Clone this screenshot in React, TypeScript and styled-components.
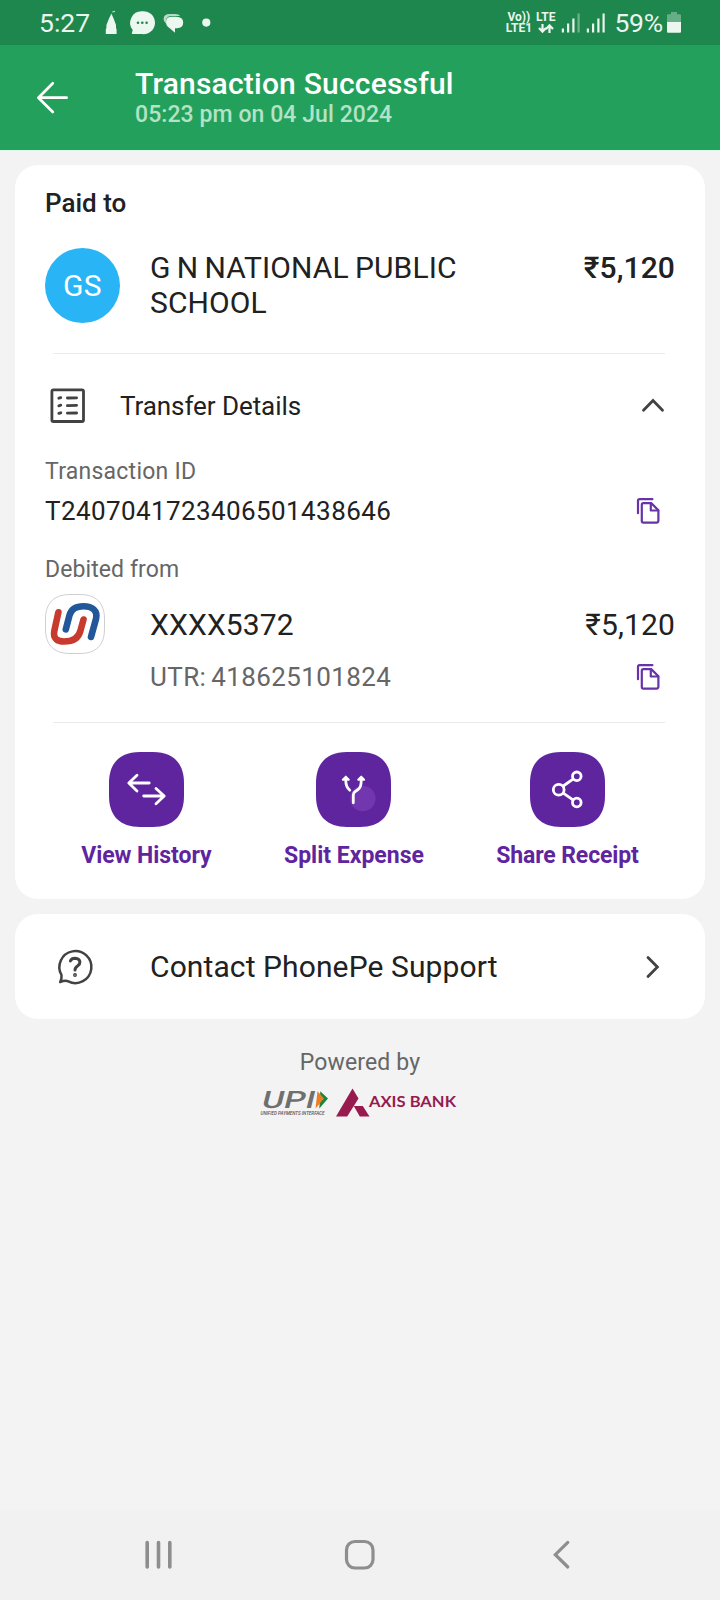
import React from "react";
import styled, { createGlobalStyle } from "styled-components";

const GlobalStyle = createGlobalStyle`
  * { box-sizing: border-box; }
  body {
    margin: 0;
    background: #f3f3f3;
    font-family: Roboto, "Liberation Sans", sans-serif;
    color: #212121;
  }
  svg { display: block; flex: none; overflow: visible; }
`;

const Screen = styled.div`
  width: 720px;
  height: 1600px;
  display: flex;
  flex-direction: column;
  overflow: hidden;
`;

const Text = styled.div<{
  $size: number;
  $line: number;
  $weight?: number;
  $color?: string;
  $track?: number;
  $wordGap?: number;
}>`
  font-size: ${(p) => p.$size}px;
  line-height: ${(p) => p.$line}px;
  font-weight: ${(p) => p.$weight ?? 400};
  color: ${(p) => p.$color ?? "#212121"};
  letter-spacing: ${(p) => p.$track ?? 0}px;
  word-spacing: ${(p) => p.$wordGap ?? 0}px;
  white-space: nowrap;
`;

const StatusBar = styled.div`
  height: 45px;
  flex: none;
  background: #1e874d;
  display: flex;
  align-items: center;
  justify-content: space-between;
  padding: 0 39px 0 39px;
`;

const StatusGroup = styled.div`
  display: flex;
  align-items: center;
  height: 45px;
`;

const NetworkLabel = styled.div<{ $after: number }>`
  display: flex;
  flex-direction: column;
  align-items: center;
  color: #e9f5ee;
  font-size: 12px;
  line-height: 11px;
  font-weight: 700;
  margin-right: ${(p) => p.$after}px;
`;

const Header = styled.header`
  height: 106px;
  flex: none;
  background: #23a15c;
  border-bottom: 1px solid #def9ea;
  display: flex;
  align-items: flex-start;
  padding: 0 36px;
`;

const BackButton = styled.div`
  width: 99px;
  padding-top: 36px;
`;

const HeaderText = styled.div`
  padding-top: 21px;
`;

const Content = styled.main`
  flex: 1;
  padding: 14px 15px 0;
`;

const Card = styled.section`
  background: #fff;
  border-radius: 23px;
`;

const PaymentCard = styled(Card)`
  height: 734px;
  padding: 23px 30px 0;
`;

const PayeeRow = styled.div`
  display: flex;
  align-items: flex-start;
  margin-top: 30px;
  height: 75px;
`;

const Avatar = styled.div`
  width: 75px;
  height: 75px;
  border-radius: 50%;
  background: #29b4f6;
  display: flex;
  align-items: center;
  justify-content: center;
  margin-right: 30px;
`;

const PayeeName = styled(Text)`
  width: 340px;
  white-space: normal;
  padding-top: 2px;
`;

const Amount = styled(Text)`
  margin-left: auto;
`;

const PayeeAmount = styled(Amount)`
  padding-top: 2px;
`;

const Divider = styled.div`
  height: 1px;
  margin: 30px 10px 0 8px;
  background: #ebebeb;
`;

const DetailsToggle = styled.div`
  display: flex;
  align-items: center;
  height: 104px;
  padding: 0 10px 0 5px;

  & > :nth-child(2) { margin-left: 34px; }
  & > :last-child { margin-left: auto; }
`;

const ValueRow = styled.div<{ $top: number; $indent?: number }>`
  display: flex;
  align-items: center;
  height: 30px;
  margin-top: ${(p) => p.$top}px;
  padding: 0 15px 0 ${(p) => p.$indent ?? 0}px;

  & > :last-child { margin-left: auto; }
`;

const DebitLabel = styled(Text)`
  margin-top: 30px;
`;

const AccountRow = styled.div`
  display: flex;
  align-items: center;
  height: 60px;
  margin-top: 11px;
`;

const AccountNumber = styled(Text)`
  margin-left: 45px;
`;

const Actions = styled.div`
  display: flex;
  justify-content: center;
  gap: 72.4px;
  margin-top: 29px;
`;

const Action = styled.div`
  display: flex;
  flex-direction: column;
  align-items: center;
  gap: 15px;
`;

const SupportCard = styled(Card)`
  height: 105px;
  margin-top: 15px;
  display: flex;
  align-items: center;
  padding: 0 45px 0 42px;

  & > :nth-child(2) { margin-left: 57px; }
  & > :last-child { margin-left: auto; }
`;

const PoweredBy = styled.footer`
  display: flex;
  flex-direction: column;
  align-items: center;
  margin-top: 30px;
`;

const Logos = styled.div`
  display: flex;
  gap: 5px;
  margin-top: 10px;
  margin-right: 3px;
`;

const NavBar = styled.nav`
  height: 90px;
  flex: none;
  background: #f1f1f1;
  display: flex;
  align-items: center;
  justify-content: space-between;
  padding: 0 150px 0 143px;

  & > :nth-child(2) { margin-right: 8px; }
`;

const CopyIcon = () => (
  <svg width="24" height="28" viewBox="0 0 24 28" fill="none" stroke="#6734a8" strokeWidth="2.2" strokeLinejoin="round" strokeLinecap="round">
    <path d="M2 16.2V3.8Q2 2.2 3.6 2.2H16.4" />
    <path d="M7.4 6.1H15.2L22.4 13.3V23.6Q22.4 25.6 20.6 25.6H7.4Q5.8 25.6 5.8 24V7.7Q5.8 6.1 7.4 6.1Z" />
    <path d="M14.8 6.5V13.5H22.2" />
  </svg>
);

const Tile = ({ children }: { children: React.ReactNode }) => (
  <svg width="75" height="75" viewBox="0 0 75 75" fill="none" stroke="#fff" strokeWidth="2.8" strokeLinecap="round" strokeLinejoin="round">
    <path d="M31 0H44C64 0 75 11 75 31V44C75 64 64 75 44 75H31C11 75 0 64 0 44V31C0 11 11 0 31 0Z" fill="#5f259f" stroke="none" />
    {children}
  </svg>
);

const SignalIcon = styled.svg<{ $after: number }>`
  margin-right: ${(p) => p.$after}px;
`;

const Signal = ({ weak, after }: { weak?: boolean; after: number }) => (
  <SignalIcon $after={after} width="20" height="22" viewBox="0 0 20 22" fill="#e9f5ee">
    <rect x="0.8" y="16.5" width="2.2" height="4" />
    <rect x="6" y="11.5" width="2.2" height="9" />
    <rect x="11.3" y="6.5" width="2.2" height="14" />
    <rect x="16.5" y="1.5" width="2.2" height="19" opacity={weak ? 0.4 : 1} />
  </SignalIcon>
);

export default function App() {
  return (
    <Screen>
      <GlobalStyle />
      <StatusBar>
        <StatusGroup>
          <Text $size={26.5} $line={30} $color="#e9f5ee">5:27</Text>
          <svg width="122" height="26" viewBox="2 0 122 26" fill="#ecf7f0">
            <path d="M24.3 1.2L27 .8V2L24.3 2.4Z" opacity="0.7" />
            <path d="M23.4 3.5L25.8 9L28 15V18L28.6 19.5V24H17.8V19.5L18.4 18V15L20.8 9Z" />
            <path d="M54 1.3A11.5 11.5 0 1 1 54 24.1H44.5Q43.4 24.1 43.9 23L44.7 20A11.5 11.5 0 0 1 54 1.3Z" />
            <g fill="#1e874d">
              <circle cx="50" cy="12.8" r="1.3" /><circle cx="54.3" cy="12.8" r="1.3" /><circle cx="58.6" cy="12.8" r="1.3" />
            </g>
            <path d="M77.8 13.5Q75.6 11.5 75.6 9Q75.6 4 82 4H87Q91 4 92 6H83Q77.4 6 77.8 13.5Z" opacity="0.75" />
            <path d="M84 6.8H88Q95.2 7 95.2 12.6T89 18.2H87V22.8L81.5 18Q78 16 78 12.2Q78 6.8 84 6.8Z" />
            <circle cx="118.3" cy="12.6" r="4.1" />
          </svg>
        </StatusGroup>
        <StatusGroup>
          <NetworkLabel $after={4}><span>Vo))</span><span>LTE1</span></NetworkLabel>
          <NetworkLabel $after={6}>
            <span>LTE</span>
            <svg width="16" height="11" viewBox="0 0 16 11" fill="none" stroke="#e9f5ee" strokeWidth="2.2">
              <path d="M4.5 1V8M1 5L4.5 8.6L8 5M11.5 10V3M8 6L11.5 2.4L15 6" />
            </svg>
          </NetworkLabel>
          <Signal weak after={5} />
          <Signal after={8} />
          <Text $size={26.5} $line={30} $color="#e9f5ee" $track={-0.2}>59%</Text>
          <svg width="18" height="24" viewBox="0 0 18 24" fill="#ecf7f0">
            <path d="M8 1H14V3.2H17Q18 3.2 18 4.2V11H4V4.2Q4 3.2 5 3.2H8Z" opacity="0.35" />
            <path d="M4 11H18V20.7Q18 21.7 17 21.7H5Q4 21.7 4 20.7Z" />
          </svg>
        </StatusGroup>
      </StatusBar>

      <Header>
        <BackButton>
          <svg width="34" height="34" viewBox="0 0 34 34" fill="none" stroke="#fff" strokeWidth="2.7" strokeLinecap="round" strokeLinejoin="round">
            <path d="M16.8 2.2L2.4 16.7L16.8 31M2.6 16.7H30.6" />
          </svg>
        </BackButton>
        <HeaderText>
          <Text $size={30} $line={35} $weight={500} $color="#fff" $track={0.2}>Transaction Successful</Text>
          <Text $size={23} $line={27} $weight={500} $color="#b4e2c7" $track={0.07}>05:23 pm on 04 Jul 2024</Text>
        </HeaderText>
      </Header>

      <Content>
        <PaymentCard>
          <Text $size={26} $line={30} $weight={500}>Paid to</Text>
          <PayeeRow>
            <Avatar><Text $size={30} $line={35} $color="#fff" $track={0.5}>GS</Text></Avatar>
            <PayeeName $size={30} $line={35} $track={0.12} $wordGap={-1.4}>G N NATIONAL PUBLIC SCHOOL</PayeeName>
            <PayeeAmount $size={30} $line={35} $weight={500} $track={0.1}>₹5,120</PayeeAmount>
          </PayeeRow>
          <Divider />
          <DetailsToggle>
            <svg width="36" height="36" viewBox="0 0 36 36" fill="none" stroke="#424242" strokeWidth="2.8" strokeLinecap="round">
              <rect x="1.9" y="1.9" width="31.6" height="31.6" rx="1.5" />
              <path d="M8.8 10.2L10.8 9.6M8.8 17.8L10.8 17.2M8.8 25.4L10.8 24.8M17.4 10L26.6 9.8M17.4 17.6L26.6 17.4M17.4 25.2L26.6 25" />
            </svg>
            <Text $size={26} $line={30} $track={-0.07}>Transfer Details</Text>
            <svg width="24" height="16" viewBox="0 0 24 16" fill="none" stroke="#424242" strokeWidth="2.8" strokeLinecap="round">
              <path d="M2.5 12.2L12 2.6L21.5 12.2" />
            </svg>
          </DetailsToggle>
          <Text $size={23} $line={27} $color="#666" $track={0.25}>Transaction ID</Text>
          <ValueRow $top={11}>
            <Text $size={26} $line={30} $track={0.4}>T2407041723406501438646</Text>
            <CopyIcon />
          </ValueRow>
          <DebitLabel $size={23} $line={27} $color="#666" $track={0.1}>Debited from</DebitLabel>
          <AccountRow>
            <svg width="60" height="60" viewBox="0 0 60 60" fill="none" strokeLinecap="round">
              <path d="M25 .5H35C51 .5 59.5 9 59.5 25V35C59.5 51 51 59.5 35 59.5H25C9 59.5 .5 51 .5 35V25C.5 9 9 .5 25 .5Z" fill="#fff" stroke="#cfcfcf" />
              <g strokeWidth="6.6">
                <path d="M13.4 18.3L9.4 36.5C7.5 45 13 47.5 19 47.5C29 47.5 34 43 35.5 36.5L38.5 25.5" stroke="#c93a2e" />
                <path d="M20.8 35.3L24.6 21C26.5 14.5 31 12.2 38.5 12.2C47 12.2 53 16.5 51 25L46 43" stroke="#22589a" />
              </g>
            </svg>
            <AccountNumber $size={30} $line={35} $track={0.15}>XXXX5372</AccountNumber>
            <Amount $size={30} $line={35} $track={0.15}>₹5,120</Amount>
          </AccountRow>
          <ValueRow $top={8} $indent={105}>
            <Text $size={26} $line={30} $color="#666" $track={0.4} $wordGap={-2}>UTR: 418625101824</Text>
            <CopyIcon />
          </ValueRow>
          <Divider />
          <Actions>
            <Action>
              <Tile>
                <path d="M28 23.2L19.8 31L28 39M20.5 31H40.2M47 36.5L55.2 44L47 51.8M34.7 44H54.5" />
              </Tile>
              <Text $size={23} $line={27} $weight={700} $color="#5f259f" $track={-0.05}>View History</Text>
            </Action>
            <Action>
              <Tile>
                <circle cx="46.8" cy="46.5" r="12.8" fill="#7237ae" stroke="none" />
                <path d="M37.3 50.8V43Q37.3 40.6 39.5 39.3L42 37.5Q45.2 35.4 45.2 29M33.8 38.2Q29.8 34.8 29.8 29" />
                <path d="M26.8 27.7L29.8 24.6L32.8 27.7ZM42.2 27.7L45.2 24.6L48.2 27.7Z" fill="#fff" strokeWidth="1.9" />
              </Tile>
              <Text $size={23} $line={27} $weight={700} $color="#5f259f">Split Expense</Text>
            </Action>
            <Action>
              <Tile>
                <circle cx="28.7" cy="37.7" r="5.4" />
                <circle cx="46.8" cy="24.3" r="4.3" />
                <circle cx="46.8" cy="50.5" r="4.3" />
                <path d="M33.3 34L43 27.2M33.3 41.2L43 47.8" />
              </Tile>
              <Text $size={23} $line={27} $weight={700} $color="#5f259f" $track={-0.12}>Share Receipt</Text>
            </Action>
          </Actions>
        </PaymentCard>

        <SupportCard>
          <svg width="36" height="36" viewBox="0 0 36 36" fill="none" stroke="#424242" strokeWidth="2.5" strokeLinecap="round" strokeLinejoin="round">
            <path d="M4.5 26A16 16 0 1 1 11.3 32.4Q8.5 31 3.2 33Q5 29.5 4.5 26Z" />
            <path d="M13.4 11.9Q14.6 9.3 18 9.3Q22.6 9.6 22.9 13Q23 15.3 20.8 16.8Q18 18.6 18 21" strokeWidth="3" />
            <circle cx="18" cy="26" r="0.7" />
          </svg>
          <Text $size={30} $line={35} $track={0.1}>Contact PhonePe Support</Text>
          <svg width="15" height="24" viewBox="0 0 15 24" fill="none" stroke="#424242" strokeWidth="2.8" strokeLinecap="round">
            <path d="M3 2.4L12.4 12L3 21.6" />
          </svg>
        </SupportCard>

        <PoweredBy>
          <Text $size={23} $line={27} $color="#666" $track={0.15}>Powered by</Text>
          <Logos>
            <svg width="72" height="32" viewBox="0 0 72 32">
              <text transform="translate(1.5 22) skewX(-14)" textLength="53" lengthAdjust="spacingAndGlyphs" fontFamily="Roboto" fontWeight="500" fontSize="24" fill="#6f6f6f">UPI</text>
              <path d="M61.3 5.3L69 12.5L60.3 22.5Z" fill="#168542" />
              <path d="M58.5 5.3L65 12.5L56.5 22.5Z" fill="#f07c22" />
              <text x="1.5" y="29" textLength="64" lengthAdjust="spacingAndGlyphs" fontFamily="Roboto" fontStyle="italic" fontWeight="500" fontSize="5" fill="#555">UNIFIED PAYMENTS INTERFACE</text>
            </svg>
            <svg width="122" height="32" viewBox="0 0 122 32">
              <g fill="#971b4e">
                <path d="M16.5 2.5L22.5 12.5L11.2 30.5H0Z" />
                <path d="M17.8 20H26.8L33.5 30.5H23.8Z" />
                <text x="33" y="20.5" textLength="87" lengthAdjust="spacingAndGlyphs" fontFamily="Lato" fontWeight="700" fontSize="14.5">AXIS BANK</text>
              </g>
            </svg>
          </Logos>
        </PoweredBy>
      </Content>

      <NavBar>
        <svg width="32" height="32" viewBox="0 0 32 32" stroke="#8e8e8e" strokeWidth="3.6" strokeLinecap="round">
          <path d="M4.2 3.5V28M15.5 3.5V28M26.8 3.5V28" />
        </svg>
        <svg width="32" height="32" viewBox="0 0 32 32" fill="none" stroke="#8e8e8e" strokeWidth="3.2">
          <rect x="2.5" y="2.5" width="26.5" height="26.5" rx="8.5" />
        </svg>
        <svg width="18" height="32" viewBox="0 0 18 32" fill="none" stroke="#8e8e8e" strokeWidth="3.2" strokeLinecap="round">
          <path d="M15.8 3.4L3.3 15.7L15.8 28" />
        </svg>
      </NavBar>
    </Screen>
  );
}
